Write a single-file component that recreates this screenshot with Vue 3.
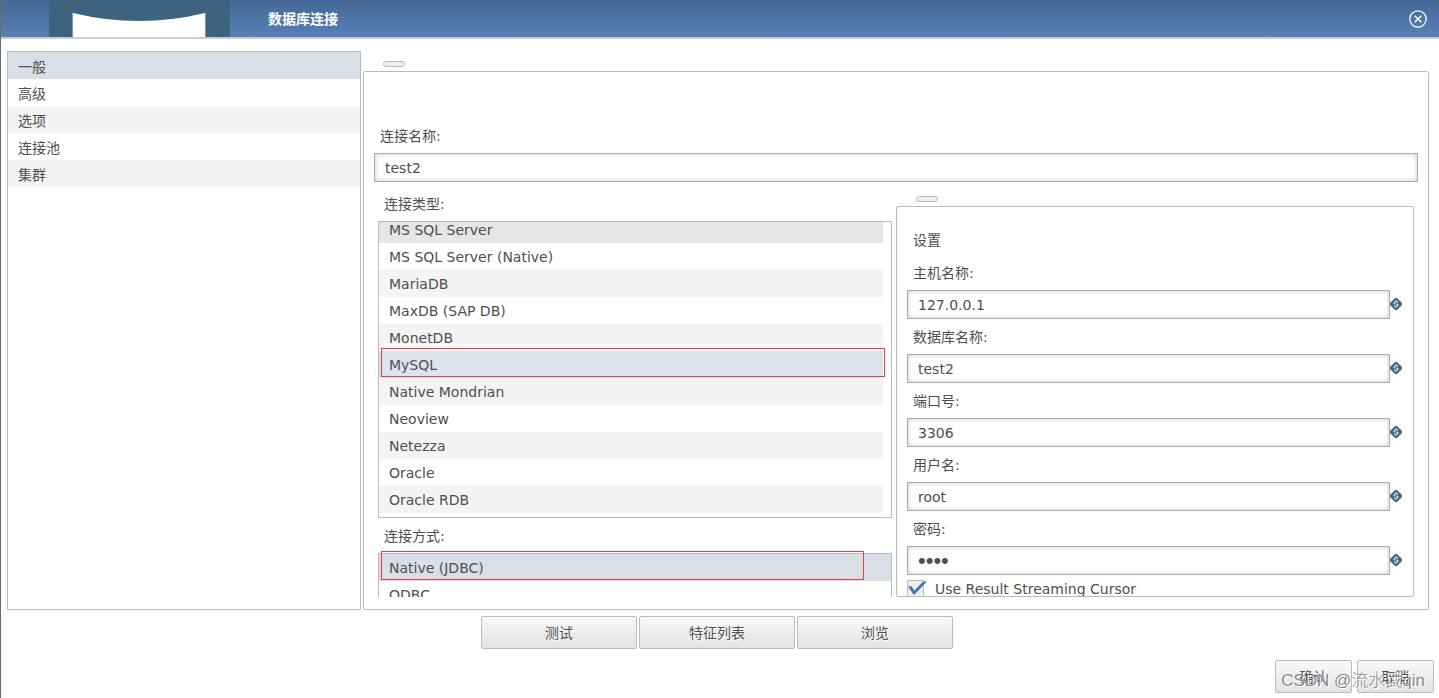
<script setup>
import { ref } from 'vue'

const sections = ['一般', '高级', '选项', '连接池', '集群']
const section = ref('一般')

const types = [
  'MS SQL Server',
  'MS SQL Server (Native)',
  'MariaDB',
  'MaxDB (SAP DB)',
  'MonetDB',
  'MySQL',
  'Native Mondrian',
  'Neoview',
  'Netezza',
  'Oracle',
  'Oracle RDB'
]
const type = ref('MySQL')

const accessModes = ['Native (JDBC)', 'ODBC']
const access = ref('Native (JDBC)')

const name = ref('test2')
const fields = ref([
  { id: 'host', label: '主机名称:', kind: 'text', value: '127.0.0.1' },
  { id: 'database', label: '数据库名称:', kind: 'text', value: 'test2' },
  { id: 'port', label: '端口号:', kind: 'text', value: '3306' },
  { id: 'user', label: '用户名:', kind: 'text', value: 'root' },
  { id: 'password', label: '密码:', kind: 'password', value: 'pass' }
])
const streaming = ref(true)
const actions = ['测试', '特征列表', '浏览']
</script>

<template>
  <div class="dialog">
    <header class="titlebar">
      <svg class="brand" viewBox="0 0 181 37" aria-hidden="true">
        <rect width="181" height="37" fill="#3f627f" />
        <path d="M24 37V13Q90 29 156 13V37Z" fill="#fff" />
        <path d="M23.500 37V12.500M156.500 37V12.500" stroke="#6f9ac8" />
      </svg>
      <h1>数据库连接</h1>
      <button class="close" type="button" aria-label="关闭">
        <svg viewBox="0 0 18 18" fill="none" stroke="#fff">
          <circle cx="9" cy="9" r="8.200" stroke-width="1.200" />
          <path d="M5.700 5.700L12.300 12.300M12.300 5.700L5.700 12.300" stroke-width="1.500" />
        </svg>
      </button>
    </header>

    <div class="body">
      <nav class="sections">
        <button
          v-for="item in sections"
          :key="item"
          type="button"
          class="row"
          :class="{ active: item === section }"
          @click="section = item"
        >{{ item }}</button>
      </nav>

      <main class="main">
        <span class="tab"></span>
        <div class="panel">
          <label class="label" for="name">连接名称:</label>
          <input id="name" v-model="name" class="field" type="text" />

          <div class="columns">
            <div class="left">
              <div class="label">连接类型:</div>
              <div class="list types">
                <button
                  v-for="item in types"
                  :key="item"
                  type="button"
                  class="row"
                  :class="{ marked: item === type }"
                  @click="type = item"
                >{{ item }}</button>
              </div>
              <div class="label">连接方式:</div>
              <div class="list access">
                <button
                  v-for="item in accessModes"
                  :key="item"
                  type="button"
                  class="row"
                  :class="{ active: item === access }"
                  @click="access = item"
                >{{ item }}</button>
              </div>
            </div>

            <div class="right">
              <span class="tab"></span>
              <div class="settings">
                <div class="label heading">设置</div>
                <template v-for="f in fields" :key="f.id">
                  <label class="label" :for="f.id">{{ f.label }}</label>
                  <div class="entry">
                    <input :id="f.id" v-model="f.value" class="field" :type="f.kind" />
                    <svg class="variable" viewBox="0 0 12 12" aria-hidden="true">
                      <path d="M5 0H7L12 5V7L7 12H5L0 7V5Z" fill="#3f6684" />
                      <path d="M7.900 4.300Q7.300 3.500 6 3.500T4.200 4.700T6 6T7.800 7.300T6 8.500Q4.600 8.500 4 7.700" fill="none" stroke="#e3edf4" stroke-width="1.100" />
                      <path d="M6 2V3.500M6 8.500V10" stroke="#a9bfcf" />
                    </svg>
                  </div>
                </template>
                <label class="check">
                  <span class="box">
                    <input v-model="streaming" type="checkbox" />
                    <svg v-if="streaming" viewBox="0 0 20 14" aria-hidden="true">
                      <path d="M1 5.500L4 5L7.500 9.500L16 0.500H20L7.500 13.500H6.500Z" fill="#4a76ad" />
                    </svg>
                  </span>
                  Use Result Streaming Cursor
                </label>
              </div>
            </div>
          </div>
        </div>
      </main>
    </div>

    <div class="actions">
      <button v-for="a in actions" :key="a" type="button" class="btn">{{ a }}</button>
    </div>
    <footer class="footer">
      <button type="button" class="btn">确认</button>
      <button type="button" class="btn">取消</button>
      <span class="watermark">CSDN @流水武qin</span>
    </footer>
  </div>
</template>

<style>
body {
  margin: 0;
  background: #fff;
}
</style>

<style scoped>
.dialog {
  box-sizing: border-box;
  min-height: 100vh;
  border-left: 1px solid #6b6b6b;
  color: #4f4f4f;
  font: 14px/20px "DejaVu Sans", "Noto Sans CJK SC", sans-serif;
}
.dialog *,
.dialog *::after {
  box-sizing: border-box;
}
button,
input {
  font: inherit;
  color: inherit;
  margin: 0;
}
.titlebar {
  display: flex;
  align-items: center;
  height: 39px;
  padding: 0 12px 0 48px;
  border-bottom: 2px solid #ccc;
  background: linear-gradient(#456995, #5780b7) padding-box;
  color: #fff;
}
.brand {
  width: 181px;
  height: 37px;
}
h1 {
  flex: 1;
  margin: 0 0 0 38px;
  font-size: 14px;
  font-weight: 700;
}
.close {
  display: flex;
  padding: 0;
  border: 0;
  background: none;
}
.close svg {
  width: 18px;
  height: 18px;
}
.body {
  display: flex;
  gap: 2px;
  padding: 12px 10px 0 6px;
}
.sections {
  flex: 0 0 354px;
  border: 1px solid #bbb;
}
.row {
  display: block;
  flex: none;
  position: relative;
  width: 100%;
  height: 27px;
  padding: 1px 10px 0;
  border: 0;
  background: #fff;
  text-align: left;
  line-height: 24px;
}
.sections .row {
  padding-top: 3px;
}
.row:nth-child(odd) {
  background: #f4f4f4;
}
.row.active {
  background: #d9dee7;
}
.main {
  flex: 1;
  min-width: 0;
  padding-top: 10px;
}
.tab {
  display: block;
  width: 22px;
  height: 6px;
  margin: 0 0 4px 20px;
  border: 1px solid #bbb;
  border-radius: 3px;
  background: #eee;
}
.panel {
  padding: 46px 10px 12px;
  border: 1px solid #bbb;
  border-radius: 2px;
}
.label {
  display: block;
  height: 35px;
  padding-left: 6px;
  line-height: 37px;
}
.field {
  display: block;
  width: 100%;
  height: 29px;
  padding: 0 10px;
  border: 1px solid #aaa;
  outline: 0;
  background: #fff;
  box-shadow: inset 0 0 5px #ccc;
}
.field[type="password"] {
  font: 22px/24px "Liberation Sans", sans-serif;
}
.columns {
  display: flex;
  gap: 4px;
  height: 411px;
  margin: 4px 4px 0;
  overflow: hidden;
}
.left {
  flex: 0 0 calc(50% - 4px);
}
.list {
  display: flex;
  flex-direction: column;
  border: 1px solid #bbb;
}
.types {
  justify-content: flex-end;
  height: 297px;
  padding: 0 8px 4px 0;
  overflow: hidden;
}
.types .row:first-child {
  background: #e6e6e6;
}
.row.marked {
  background: #dee4ed;
}
.marked::after,
.access .active::after {
  content: "";
  position: absolute;
  z-index: 1;
  top: -3px;
  bottom: 1px;
  left: 2px;
  right: -2px;
  border: 1px solid #f23a3a;
}
.access .active::after {
  right: 27px;
}
.right {
  flex: 1;
  min-width: 0;
  padding-top: 10px;
}
.settings {
  height: 391px;
  padding: 15px 11px 0 10px;
  border: 1px solid #bbb;
  border-radius: 2px;
  overflow: hidden;
}
.heading {
  height: 33px;
}
.entry {
  display: flex;
  align-items: center;
}
.entry .field {
  flex: 1;
  min-width: 0;
}
.variable {
  width: 12px;
  height: 12px;
  margin-bottom: 2px;
}
.check {
  display: flex;
  align-items: flex-start;
  gap: 11px;
  height: 18px;
  margin-top: 5px;
  line-height: 18px;
}
.box {
  position: relative;
  width: 17px;
  height: 17px;
}
.box input {
  display: block;
  width: 17px;
  height: 17px;
  border: 1px solid #bbb;
  background: #eee;
  appearance: none;
}
.box svg {
  position: absolute;
  top: 1px;
  left: 0;
  width: 20px;
  height: 14px;
}
.actions {
  display: flex;
  justify-content: center;
  gap: 2px;
  padding: 6px 6px 0 0;
}
.btn {
  width: 156px;
  height: 33px;
  padding: 0;
  border: 1px solid #bbb;
  border-radius: 2px;
  background: linear-gradient(#f9f9f9, #e2e2e2);
  text-shadow: 1px 1px 0 #fff;
}
.footer {
  position: relative;
  display: flex;
  justify-content: flex-end;
  gap: 5px;
  padding: 11px 5px 5px;
}
.footer .btn {
  width: 77px;
}
.watermark {
  position: absolute;
  right: 14px;
  bottom: 5px;
  color: rgba(90, 90, 90, 0.7);
  font: 300 17px/24px "Liberation Sans", "Noto Sans CJK SC", sans-serif;
  text-shadow: 1px 1px 0 #fff;
  pointer-events: none;
}
</style>
